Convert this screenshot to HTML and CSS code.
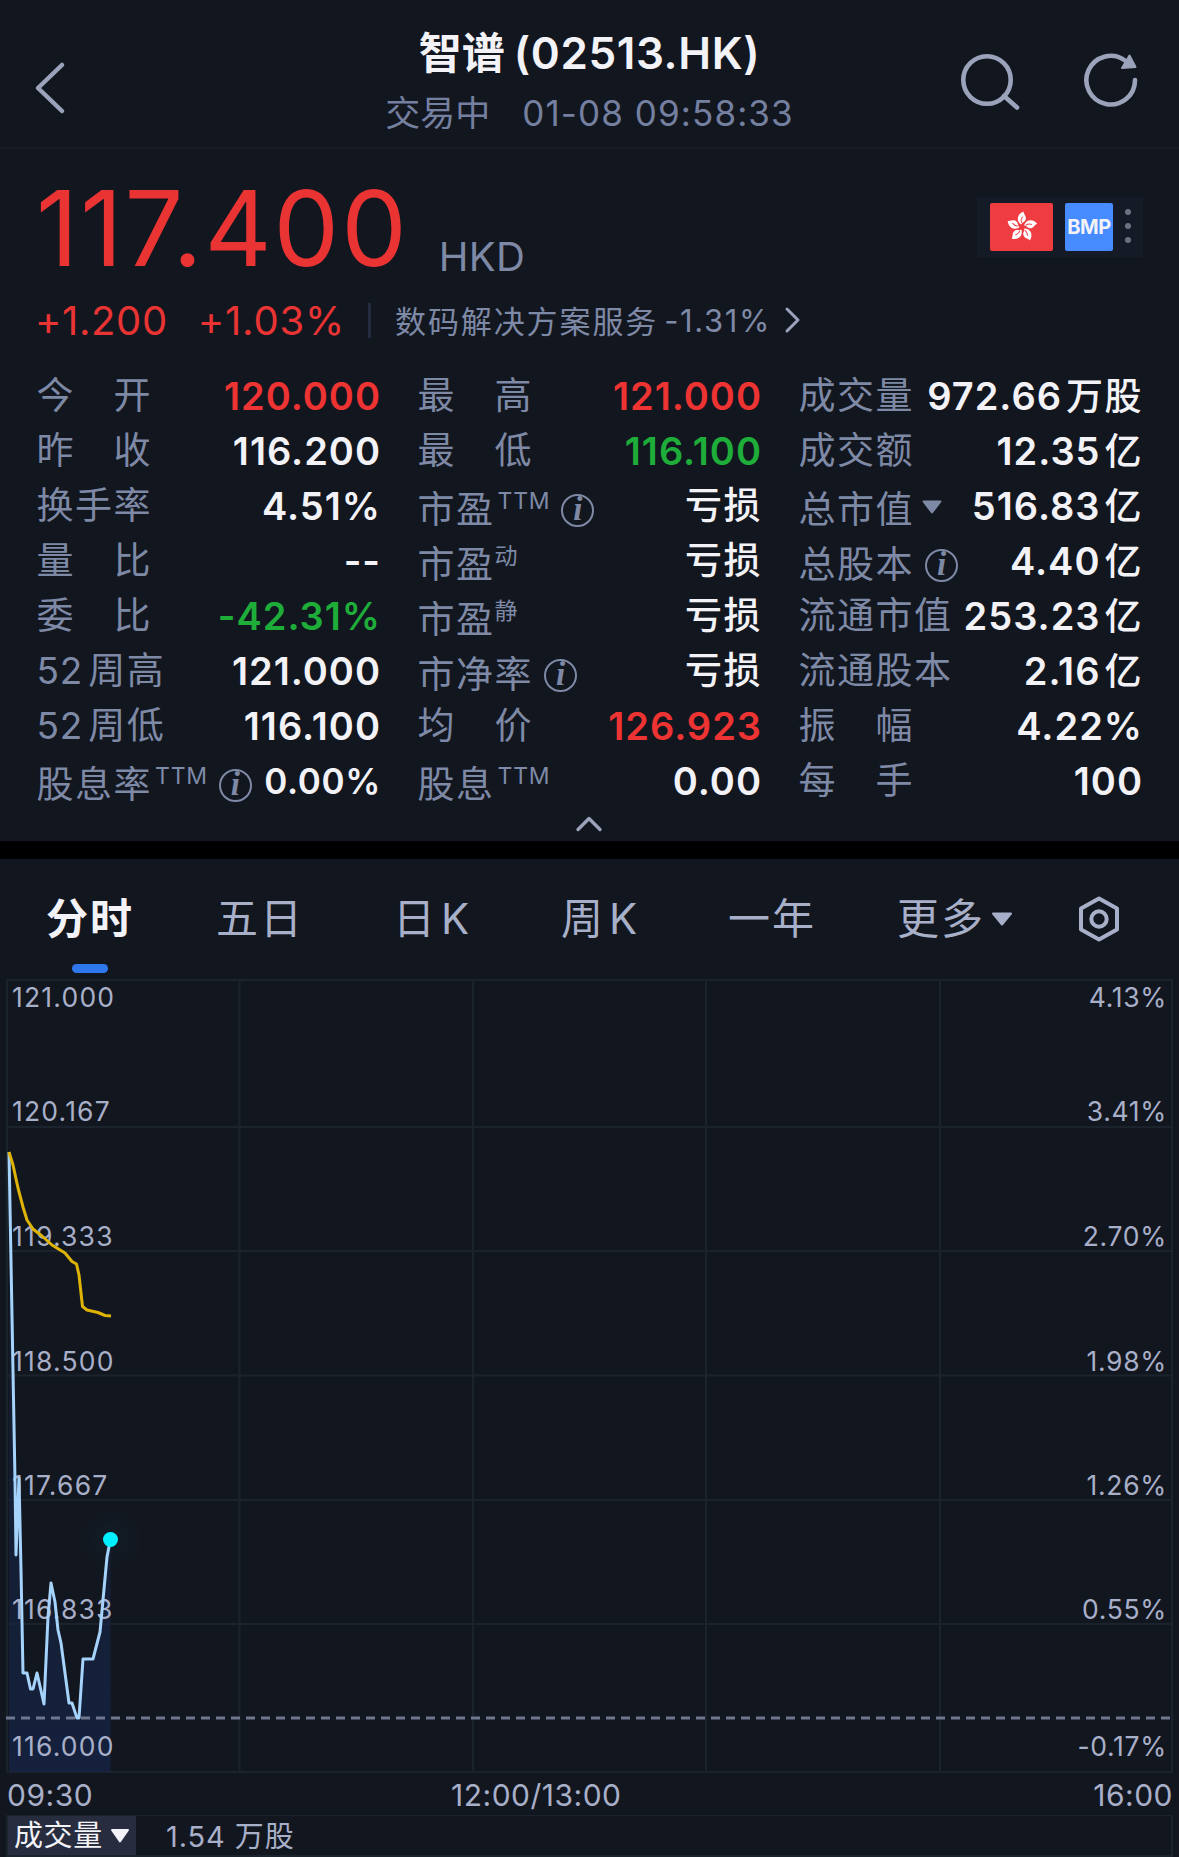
FILE: index.html
```html
<!DOCTYPE html>
<html lang="zh-CN">
<head>
    <meta charset="UTF-8">
    <meta name="viewport" content="width=device-width, initial-scale=1.0">
    <title>智谱 (02513.HK)</title>
    <link rel="stylesheet" href="styles.css">
</head>
<body>
    <header class="header">
        <svg class="back" width="32" height="54" viewBox="0 0 32 54">
            <path d="M28 4 L4 27 L28 50" />
        </svg>
        <div class="title-block">
            <h1><span class="name">智谱</span><span class="code">(02513.HK)</span></h1>
            <div class="status"><span>交易中</span><span class="time">01-08 09:58:33</span></div>
        </div>
        <div class="header-icons">
            <svg width="62" height="60" viewBox="0 0 62 60">
                <circle cx="27" cy="30" r="23.7" />
                <path d="M44 46 L57 57.5" />
            </svg>
            <svg width="56" height="60" viewBox="0 0 56 60">
                <path d="M52 30 A24.3 24.3 0 1 1 42 10.5" />
                <path class="arrow" d="M39 18 L46.5 5.5 L52.5 17 Z" />
            </svg>
        </div>
    </header>

    <section class="quote">
        <div class="price-row">
            <span class="price">117.400</span>
            <span class="currency">HKD</span>
            <div class="badges">
                <span class="flag">
                    <svg width="34" height="34" viewBox="-17 -17 34 34">
                        <defs>
                            <g id="petal">
                                <path class="petal" d="M-1 -2.5 C-6 -6 -5 -13 1.5 -15.5 C1.5 -12.5 5 -11 3.5 -7 C2.8 -5 0.5 -5 -1 -2.5 Z" />
                                <path class="vein" d="M-0.5 -4.5 C-1.5 -7 -0.5 -8.5 0.5 -10" />
                            </g>
                        </defs>
                        <use href="#petal" />
                        <use href="#petal" transform="rotate(72)" />
                        <use href="#petal" transform="rotate(144)" />
                        <use href="#petal" transform="rotate(216)" />
                        <use href="#petal" transform="rotate(288)" />
                    </svg>
                </span>
                <span class="bmp">BMP</span>
                <span class="dots"><i></i><i></i><i></i></span>
            </div>
        </div>
        <div class="change-row">
            <span class="change">+1.200</span>
            <span class="change-pct">+1.03%</span>
            <span class="divider"></span>
            <span class="industry">数码解决方案服务</span>
            <span class="industry-pct">-1.31%</span>
            <svg width="18" height="28" viewBox="0 0 18 28"><path d="M3 3 L14 14 L3 25" /></svg>
        </div>

        <div class="stats">
            <div class="col">
                <div class="stat"><span class="label">今　开</span><span class="value up">120.000</span></div>
                <div class="stat"><span class="label">昨　收</span><span class="value">116.200</span></div>
                <div class="stat"><span class="label">换手率</span><span class="value">4.51%</span></div>
                <div class="stat"><span class="label">量　比</span><span class="value">--</span></div>
                <div class="stat"><span class="label">委　比</span><span class="value down">-42.31%</span></div>
                <div class="stat"><span class="label"><b>52</b>周高</span><span class="value">121.000</span></div>
                <div class="stat"><span class="label"><b>52</b>周低</span><span class="value">116.100</span></div>
                <div class="stat"><span class="label low">股息率<sup>TTM</sup><em class="info">i</em></span><span class="value small">0.00%</span></div>
            </div>
            <div class="col">
                <div class="stat"><span class="label">最　高</span><span class="value up">121.000</span></div>
                <div class="stat"><span class="label">最　低</span><span class="value down">116.100</span></div>
                <div class="stat"><span class="label low">市盈<sup>TTM</sup><em class="info">i</em></span><span class="value cjk">亏损</span></div>
                <div class="stat"><span class="label low">市盈<sup class="zh">动</sup></span><span class="value cjk">亏损</span></div>
                <div class="stat"><span class="label low">市盈<sup class="zh">静</sup></span><span class="value cjk">亏损</span></div>
                <div class="stat"><span class="label low">市净率<em class="info">i</em></span><span class="value cjk">亏损</span></div>
                <div class="stat"><span class="label">均　价</span><span class="value up">126.923</span></div>
                <div class="stat"><span class="label low">股息<sup>TTM</sup></span><span class="value">0.00</span></div>
            </div>
            <div class="col">
                <div class="stat"><span class="label">成交量</span><span class="value">972.66<span class="unit">万股</span></span></div>
                <div class="stat"><span class="label">成交额</span><span class="value">12.35<span class="unit">亿</span></span></div>
                <div class="stat"><span class="label low">总市值<svg class="caret" width="20" height="14" viewBox="0 0 20 14"><path d="M1.5 1.5 H18.5 L10 12.5 Z" /></svg></span><span class="value">516.83<span class="unit">亿</span></span></div>
                <div class="stat"><span class="label low">总股本<em class="info">i</em></span><span class="value">4.40<span class="unit">亿</span></span></div>
                <div class="stat"><span class="label">流通市值</span><span class="value">253.23<span class="unit">亿</span></span></div>
                <div class="stat"><span class="label">流通股本</span><span class="value">2.16<span class="unit">亿</span></span></div>
                <div class="stat"><span class="label">振　幅</span><span class="value">4.22%</span></div>
                <div class="stat"><span class="label">每　手</span><span class="value">100</span></div>
            </div>
        </div>
        <svg class="collapse" width="28" height="18" viewBox="0 0 28 18"><path d="M3 14.5 L14 3.5 L25 14.5" /></svg>
    </section>

    <nav class="tabs">
        <span class="tab active">分时</span>
        <span class="tab">五日</span>
        <span class="tab">日<span class="k">K</span></span>
        <span class="tab">周<span class="k">K</span></span>
        <span class="tab">一年</span>
        <span class="tab">更多<svg class="caret" width="22" height="14" viewBox="0 0 22 14"><path d="M2 1.5 H20 L11 12.5 Z" /></svg></span>
        <svg class="settings" width="42" height="46" viewBox="0 0 42 46">
            <path d="M21 2.5 L39 12.5 V33.5 L21 43.5 L3 33.5 V12.5 Z" />
            <circle cx="21" cy="23" r="7.7" />
        </svg>
    </nav>

    <svg class="chart" width="1179" height="795" viewBox="0 979 1179 795">
        <defs>
            <linearGradient id="area" x1="0" y1="0" x2="0" y2="1">
                <stop offset="0" stop-color="#162540" stop-opacity="0.25" />
                <stop offset="0.6" stop-color="#152340" stop-opacity="0.65" />
                <stop offset="1" stop-color="#152240" stop-opacity="0.9" />
            </linearGradient>
            <radialGradient id="halo">
                <stop offset="0" stop-color="#00e5ff" stop-opacity="0.03" />
                <stop offset="1" stop-color="#00e5ff" stop-opacity="0" />
            </radialGradient>
        </defs>

        <path class="grid" d="M7 980 H1172 V1772 H7 Z M7 1127 H1172 M7 1251 H1172 M7 1375.5 H1172 M7 1500 H1172 M7 1624 H1172 M239.5 980 V1772 M473 980 V1772 M706 980 V1772 M940 980 V1772" />

        <path class="area" d="M9 1152 L15 1480 L16 1555 L19 1478 L21 1570 L23 1673 L27 1673 L30.5 1689 L33 1689 L37 1673 L44 1704 L48 1617 L51 1583 L55 1602 L58 1630 L61 1643 L69 1703 L72 1703 L77 1718 L79 1718 L83 1659 L93 1659 L100 1632 L107 1557 L110.5 1539 V1772 H9 Z" />

        <g class="axis">
            <text x="12" y="1007">121.000</text>
            <text x="12" y="1121">120.167</text>
            <text x="12" y="1245.5">119.333</text>
            <text x="12" y="1370.5">118.500</text>
            <text x="12" y="1494.5">117.667</text>
            <text x="12" y="1618.5">116.833</text>
            <text x="12" y="1755.5">116.000</text>
        </g>
        <g class="axis right">
            <text x="1167" y="1007">4.13%</text>
            <text x="1167" y="1121">3.41%</text>
            <text x="1167" y="1245.5">2.70%</text>
            <text x="1167" y="1370.5">1.98%</text>
            <text x="1167" y="1494.5">1.26%</text>
            <text x="1167" y="1618.5">0.55%</text>
            <text x="1167" y="1755.5">-0.17%</text>
        </g>

        <path class="prev-close" d="M6 1718 H1171" />
        <path class="line price-line" d="M9 1152 L15 1480 L16 1555 L19 1478 L21 1570 L23 1673 L27 1673 L30.5 1689 L33 1689 L37 1673 L44 1704 L48 1617 L51 1583 L55 1602 L58 1630 L61 1643 L69 1703 L72 1703 L77 1718 L79 1718 L83 1659 L93 1659 L100 1632 L107 1557 L110.5 1539" />
        <path class="line avg-line" d="M9 1152 L13 1165 L18 1188 L23 1207 L27 1220 L33 1229 L42 1236 L52 1245 L65 1253 L72 1261.5 L76.5 1264 L79 1275 L82.5 1306.5 L87 1310 L98 1312.5 L105 1315.5 L111 1316" />
        <circle cx="110.5" cy="1539" r="34" fill="url(#halo)" />
        <circle class="now" cx="110.5" cy="1539.5" r="7.5" />
    </svg>

    <div class="times">
        <span>09:30</span>
        <span>12:00/13:00</span>
        <span>16:00</span>
    </div>

    <div class="volume">
        <span class="picker">成交量<svg class="caret" width="20" height="16" viewBox="0 0 20 16"><path d="M2 2 H18 L10 13.5 Z" /></svg></span>
        <span class="amount">1.54 万股</span>
    </div>
</body>
</html>
```

FILE: styles.css
```css
* {
    box-sizing: border-box;
}

body {
    margin: 0;
    width: 1179px;
    height: 1857px;
    overflow: hidden;
    background: #12161f;
    color: #f2f2f7;
    font-family: Inter, "Noto Sans CJK SC", sans-serif;
}

svg {
    display: block;
    flex: none;
    fill: none;
    stroke-linecap: round;
    stroke-linejoin: round;
}

/* header */
.header {
    display: grid;
    grid-template-columns: 1fr auto 1fr;
    height: 149px;
    padding: 23px 34px 0 34px;
    border-bottom: 2px solid #181d27;
}

.back {
    margin-top: 38px;
    stroke: #9ba3bb;
    stroke-width: 4.5;
}

.title-block {
    text-align: center;
    white-space: nowrap;
}

h1 {
    display: flex;
    justify-content: center;
    margin: 0;
    font-size: 44px;
    line-height: 60px;
    font-weight: 600;
}

.name {
    margin-right: 9px;
    font-weight: 700;
    font-size: 43px;
}

.code {
    font-weight: 600;
    letter-spacing: 0.6px;
}

.status {
    display: flex;
    justify-content: center;
    gap: 32px;
    font-size: 35px;
    line-height: 60px;
    color: #7580a0;
}

.time {
    letter-spacing: 1.1px;
}

.header-icons {
    display: flex;
    justify-content: flex-end;
    gap: 61px;
    margin: 27px 6px 0 0;
    stroke: #9ba3bb;
    stroke-width: 4.6;
}

.arrow {
    fill: #9ba3bb;
    stroke-width: 2;
}

/* quote */
.quote {
    height: 710px;
    padding: 12px 38px 0 37px;
    border-bottom: 18px solid #000;
}

.price-row {
    display: flex;
    align-items: center;
    height: 134px;
}

.price {
    margin-left: -1px;
    font-size: 104px;
    line-height: 134px;
    letter-spacing: 2px;
    color: #ea3434;
}

.currency {
    padding-top: 57px;
    margin-left: 30px;
    font-size: 40px;
    letter-spacing: 0.3px;
    color: #7e89a6;
}

.badges {
    display: flex;
    align-items: center;
    gap: 12px;
    width: 166px;
    height: 60px;
    margin: 0 -2px 2px auto;
    padding-left: 13px;
    background: #141b27;
}

.flag,
.bmp {
    display: flex;
    align-items: center;
    justify-content: center;
    height: 48px;
    border-radius: 2px;
}

.flag {
    width: 63px;
    background: #ee3c40;
}

.petal {
    fill: #fff;
}

.vein {
    stroke: #ee3c40;
    stroke-width: 1;
}

.bmp {
    width: 48px;
    background: #468bff;
    font-size: 20px;
    font-weight: 700;
    letter-spacing: -0.5px;
}

.dots {
    display: flex;
    flex-direction: column;
    gap: 8px;
    margin-bottom: 2px;
}

.dots i {
    width: 6px;
    height: 6px;
    border-radius: 50%;
    background: #6b7183;
}

.change-row {
    display: flex;
    align-items: center;
    height: 50px;
    font-size: 40px;
    color: #ea3434;
}

.change {
    margin-left: -2px;
    letter-spacing: 0.6px;
}

.change-pct {
    margin-left: 30px;
    letter-spacing: 0.8px;
}

.divider {
    width: 3px;
    height: 35px;
    margin: 0 24px 0 23px;
    background: #232b3f;
}

.industry {
    padding-bottom: 2px;
    font-size: 31px;
    letter-spacing: 1.9px;
    color: #7e89a6;
}

.industry-pct {
    margin: 0 13px 0 6px;
    font-size: 31px;
    letter-spacing: 1.6px;
    color: #7e89a6;
}

.change-row svg {
    stroke: #9ba3bb;
    stroke-width: 3;
}

.stats {
    display: grid;
    grid-template-columns: repeat(3, 342px);
    gap: 39px;
    margin-top: 23px;
}

.stat {
    display: flex;
    justify-content: space-between;
    height: 55px;
    line-height: 56px;
    white-space: nowrap;
}

.label {
    display: flex;
    margin-left: -0.5px;
    font-size: 37px;
    letter-spacing: 1.5px;
    color: #7e89a6;
}

.label b {
    margin-right: 5px;
    font-weight: 400;
    letter-spacing: 0.8px;
}

.label.low {
    padding-top: 4px;
}

.label sup {
    margin-left: 3px;
    font-size: 23px;
    line-height: 39px;
    letter-spacing: 0.8px;
}

.label sup.zh {
    margin-left: 0;
}

.info {
    width: 33px;
    height: 33px;
    margin: 12px 0 0 11px;
    border: 2px solid #7e89a6;
    border-radius: 50%;
    font: italic bold 33px/27px "Liberation Serif", serif;
    letter-spacing: 0;
    text-align: center;
}

.caret {
    fill: currentColor;
    stroke: currentColor;
    stroke-width: 2;
}

.label .caret {
    margin: 18px 0 0 8px;
}

.value {
    font-size: 38px;
    font-weight: 600;
    letter-spacing: 1px;
    margin-right: -2px;
}

.value.small {
    font-size: 35px;
    letter-spacing: 0.6px;
}

.value.cjk {
    font-size: 37px;
    font-weight: 500;
    letter-spacing: 1.5px;
}

.unit {
    margin-left: 4px;
    font-size: 37px;
    font-weight: 500;
    letter-spacing: 1.5px;
}

.up {
    color: #ee3333;
}

.down {
    color: #1fad3a;
}

.collapse {
    margin: 7px auto 0;
    stroke: #9ba3bb;
    stroke-width: 3.4;
}

/* period tabs */
.tabs {
    display: grid;
    grid-template-columns: 170px 177px 168px 167px 169px 181px auto;
    height: 120px;
    padding: 0 0 0 46px;
    font-size: 42px;
    line-height: 122px;
    letter-spacing: 2px;
    color: #a8afc8;
}

.tab {
    display: flex;
    align-items: center;
    height: 120px;
}

.tab .k {
    margin-left: 4px;
}

.tab .caret {
    margin-left: 6px;
}

.active {
    position: relative;
    color: #f2f2f7;
    font-weight: 700;
}

.active::after {
    content: "";
    position: absolute;
    left: 26px;
    bottom: 6px;
    width: 36px;
    height: 9px;
    border-radius: 4.5px;
    background: #2f78ec;
}

.settings {
    margin-top: 37px;
    stroke: #a8afc8;
    stroke-width: 4;
}

/* chart */
.grid {
    stroke: #1b242c;
    stroke-width: 2;
}

.area {
    fill: url(#area);
}

.axis {
    fill: #a8afc8;
    font-size: 26.5px;
    letter-spacing: 1.2px;
}

.right {
    letter-spacing: 0.7px;
    text-anchor: end;
}

.prev-close {
    stroke: #6f778f;
    stroke-width: 3;
    stroke-dasharray: 9 6;
    stroke-linecap: butt;
}

.line {
    stroke-width: 3;
    stroke-linecap: butt;
}

.price-line {
    stroke: #a5d3fb;
}

.avg-line {
    stroke: #ddb306;
}

.now {
    fill: #00f0ff;
}

.times {
    display: grid;
    grid-template-columns: 444px auto 1fr;
    height: 41px;
    padding: 0 6px 0 7px;
    font-size: 30px;
    line-height: 43px;
    letter-spacing: 0.5px;
    color: #a8afc8;
}

.times span:last-child {
    text-align: right;
}

.volume {
    display: flex;
    height: 42px;
    margin: 0 6px;
    border: 2px solid #1b242c;
    border-top-width: 1px;
    font-size: 29px;
    line-height: 41px;
}

.picker {
    display: flex;
    align-items: center;
    width: 128px;
    padding-left: 6px;
    background: #272d3f;
    letter-spacing: 0.6px;
}

.picker .caret {
    margin-left: 7px;
}

.amount {
    margin-left: 30px;
    letter-spacing: 0.9px;
    color: #a8afc8;
}
```
